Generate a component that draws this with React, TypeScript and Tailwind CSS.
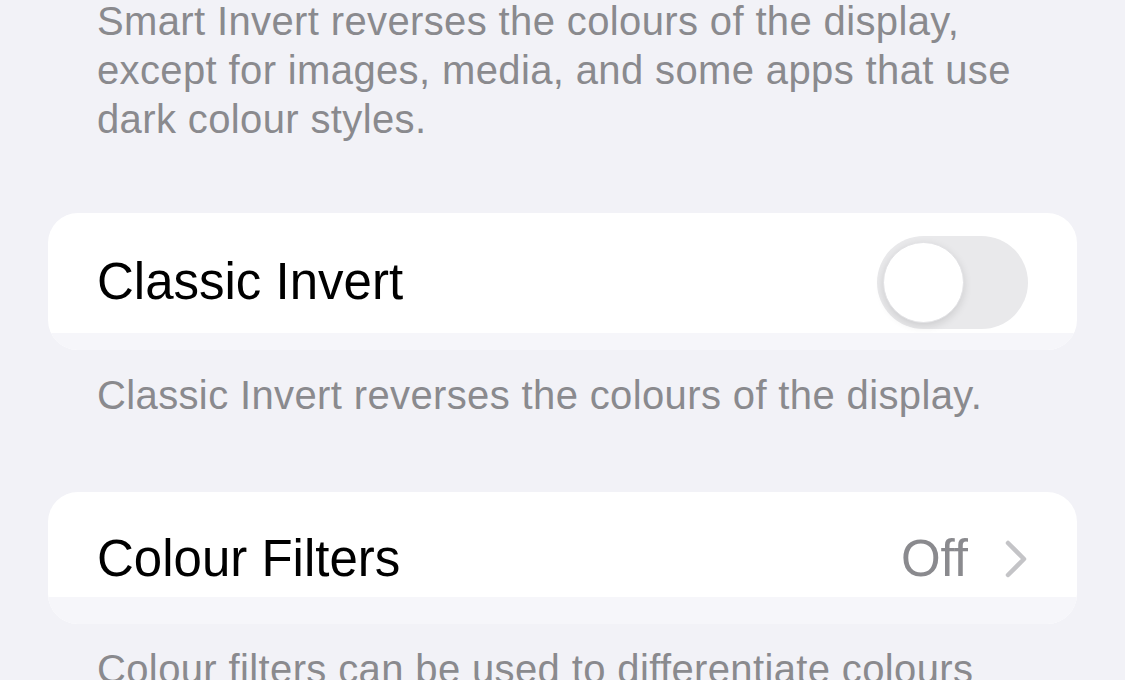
const font = { fontFamily: '"Liberation Sans", Arial, sans-serif' }

function Toggle() {
  return (
    <div className="w-[151px] h-[93px] rounded-full bg-[#e9e9eb] p-[6px] flex items-center">
      <div className="w-[81px] h-[81px] rounded-full bg-white border border-[#e2e2e5] shadow-[0_3px_8px_rgba(0,0,0,0.12)]" />
    </div>
  )
}

function Chevron() {
  return (
    <svg width="24" height="38" viewBox="0 0 24 38" fill="none">
      <path d="M4 3 L20 19 L4 35" stroke="#c4c4c7" strokeWidth="4.5" strokeLinecap="round" strokeLinejoin="round" />
    </svg>
  )
}

function Note({ children }: { children: React.ReactNode }) {
  return (
    <p className="pl-[49px] pr-[20px] text-[40px] leading-[49px] tracking-[0.37px] text-[#8a8a8e]">
      {children}
    </p>
  )
}

export default function App() {
  return (
    <div className="w-[1125px] h-[680px] overflow-hidden bg-[#f2f2f7] px-[48px]" style={font}>
      <div className="-mt-[3px]">
        <Note>
          Smart Invert reverses the colours of the display,
          <br />
          except for images, media, and some apps that use
          <br />
          dark colour styles.
        </Note>
      </div>

      {/* Classic Invert */}
      <div className="mt-[69px] rounded-[30px] overflow-hidden bg-white">
        <div className="h-[120px] pt-[18px] pl-[49px] pr-[49px] flex items-center justify-between">
          <span className="text-[51px] leading-[60px] text-black">Classic Invert</span>
          <Toggle />
        </div>
        <div className="h-[17px] bg-[#f6f6fa]" />
      </div>

      <div className="mt-[21px]">
        <Note>Classic Invert reverses the colours of the display.</Note>
      </div>

      {/* Colour Filters */}
      <div className="mt-[72px] rounded-[30px] overflow-hidden bg-white">
        <div className="h-[105px] pt-[28px] pl-[49px] pr-[49px] flex items-center justify-between">
          <span className="text-[51px] leading-[60px] text-black">Colour Filters</span>
          <div className="flex items-center gap-[36px]">
            <span className="text-[51px] leading-[60px] text-[#8a8a8e]">Off</span>
            <Chevron />
          </div>
        </div>
        <div className="h-[27px] bg-[#f6f6fa]" />
      </div>

      <div className="mt-[21px]">
        <Note>Colour filters can be used to differentiate colours</Note>
      </div>
    </div>
  )
}
